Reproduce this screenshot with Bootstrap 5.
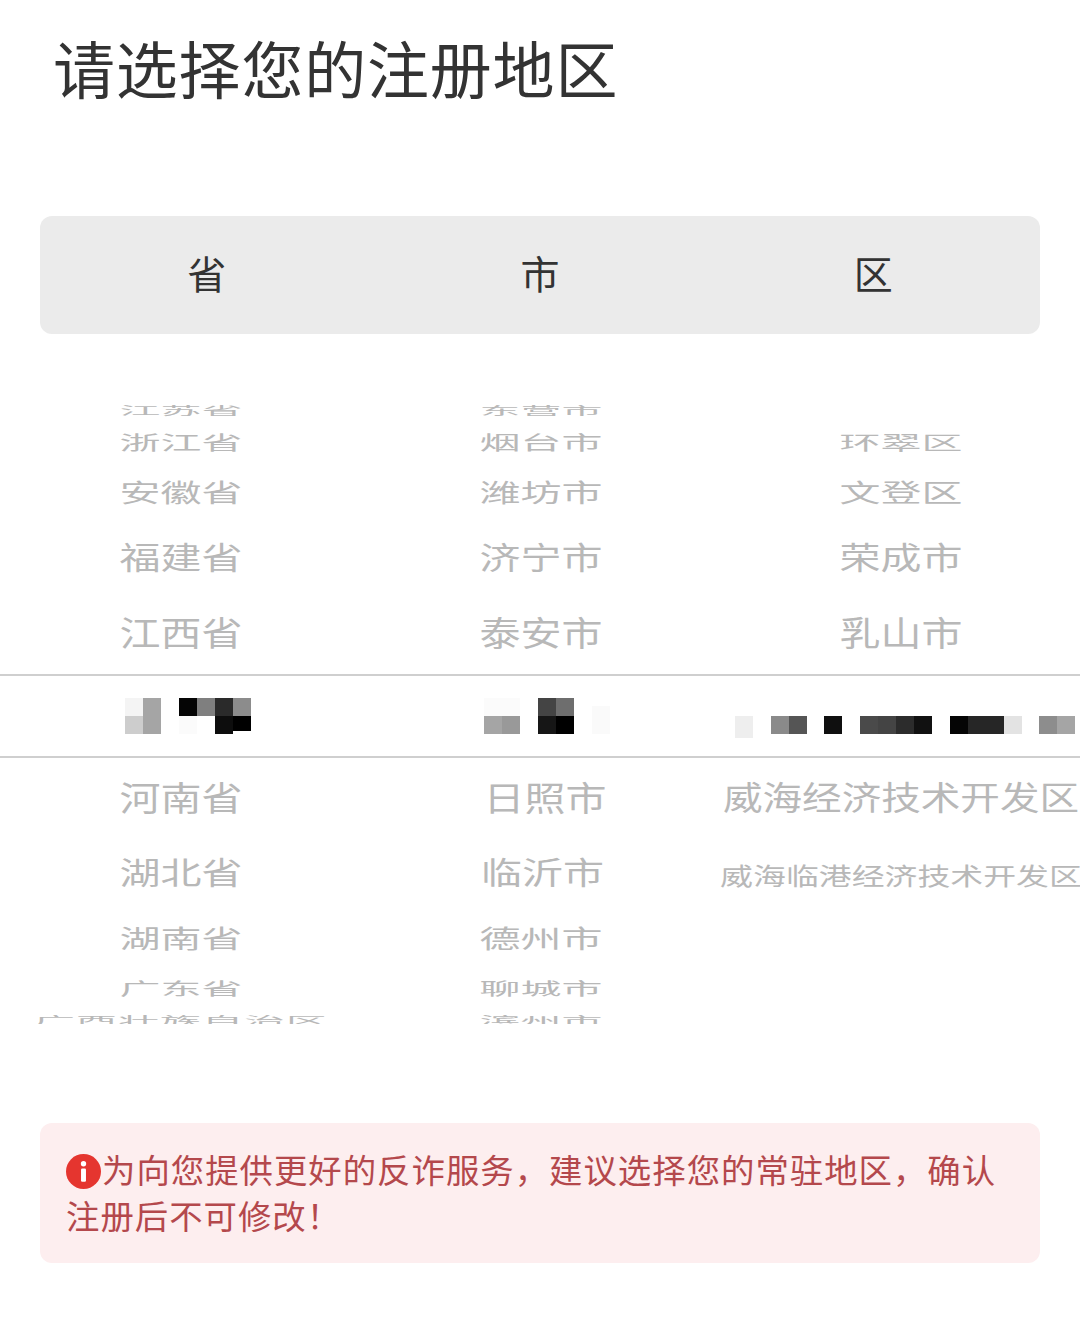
<!DOCTYPE html>
<html lang="zh-CN">
<head>
<meta charset="utf-8">
<title>请选择您的注册地区</title>
<link rel="stylesheet" href="https://cdn.jsdelivr.net/npm/bootstrap@5.3.0/dist/css/bootstrap.min.css">
<style>
body{background:#fff;font-family:"Noto Sans CJK SC","Liberation Sans",sans-serif;width:1080px;height:1328px;overflow:hidden}
.page-title{font-size:62px;line-height:70px;font-weight:400;color:#333;letter-spacing:.8px;padding:32px 0 0 53px;margin:0 0 114px}
.tab-bar{margin:0 40px;height:118px;background:#ebebeb;border-radius:12px;font-size:39px;color:#333;padding-bottom:6px}
.wheel{margin-top:71px;height:619px;overflow:hidden;color:#b8b8b8}
.wheel-in{margin-top:-6px}
.wheel-row{font-size:41px;line-height:1}
.wheel-row>div{display:flex;align-items:center;justify-content:center;height:100%;white-space:nowrap;padding-left:2px}
.h24{height:24px}.h26{height:26px}.h38{height:38px}.h62{height:62px}.h68{height:68px}.h83{height:83px}
.h78{height:78px}.h72{height:72px}.h60{height:60px}.h40{height:40px}
.sq25 span{transform:scaleY(.27)}.sq45 span{transform:scaleY(.46)}.sq58 span{transform:scaleY(.6)}
.sq72 span{transform:scaleY(.74)}.sq80 span{transform:scaleY(.82)}.sq40 span{transform:scaleY(.42)}
.wheel-row span{display:inline-block;margin-bottom:2px}
.wide{letter-spacing:1px}
.wheel-row .long1{font-size:39.6px}
.wheel-row .long2{font-size:32.9px;margin-top:8px}
.wheel-row>.nudge{padding-left:10px}
.wheel-row>.nudge2{padding-left:5px}
.picked{height:84px;border-top:2px solid #cfcfcf;border-bottom:2px solid #cfcfcf}
.picked svg{display:block}
.notice{margin:99px 40px 0;height:140px;background:#fdeeef;border:0;border-radius:12px;padding:23px 26px;color:#b4484c;font-size:33.4px;line-height:46px;letter-spacing:1px}
.notice svg{width:35px;height:35px;vertical-align:-6px;margin-right:1px}
</style>
</head>
<body>
<h1 class="page-title">请选择您的注册地区</h1>

<div class="tab-bar row g-0 text-center align-items-center">
  <div class="col-4">省</div>
  <div class="col-4">市</div>
  <div class="col-4">区</div>
</div>

<div class="wheel">
  <div class="wheel-in">
    <div class="wheel-row row g-0 h24 sq25"><div class="col-4"><span>江苏省</span></div><div class="col-4"><span>东营市</span></div><div class="col-4"></div></div>
    <div class="wheel-row row g-0 h38 sq45"><div class="col-4"><span>浙江省</span></div><div class="col-4"><span>烟台市</span></div><div class="col-4"><span>环翠区</span></div></div>
    <div class="wheel-row row g-0 h62 sq58"><div class="col-4"><span>安徽省</span></div><div class="col-4"><span>潍坊市</span></div><div class="col-4"><span>文登区</span></div></div>
    <div class="wheel-row row g-0 h68 sq72"><div class="col-4"><span>福建省</span></div><div class="col-4"><span>济宁市</span></div><div class="col-4"><span>荣成市</span></div></div>
    <div class="wheel-row row g-0 h83 sq80"><div class="col-4"><span>江西省</span></div><div class="col-4"><span>泰安市</span></div><div class="col-4"><span>乳山市</span></div></div>

    <div class="picked">
      <svg width="1080" height="80" viewBox="0 0 1080 80" xmlns="http://www.w3.org/2000/svg" shape-rendering="crispEdges">
        <rect x="125" y="22" width="18" height="18" fill="#f4f4f4"/><rect x="125" y="40" width="18" height="18" fill="#cdcdcd"/>
        <rect x="143" y="22" width="18" height="36" fill="#a5a5a5"/>
        <rect x="179" y="22" width="18" height="18" fill="#050505"/><rect x="179" y="40" width="18" height="18" fill="#fbfbfb"/>
        <rect x="197" y="22" width="18" height="18" fill="#7f7f7f"/>
        <rect x="215" y="22" width="18" height="18" fill="#2a2a2a"/><rect x="215" y="40" width="18" height="18" fill="#0d0d0d"/>
        <rect x="233" y="22" width="18" height="18" fill="#8c8c8c"/><rect x="233" y="40" width="18" height="15" fill="#000"/>
        <rect x="484" y="22" width="36" height="18" fill="#fbfbfb"/><rect x="484" y="40" width="18" height="18" fill="#a5a5a5"/><rect x="502" y="40" width="18" height="18" fill="#999"/>
        <rect x="538" y="22" width="18" height="18" fill="#444"/><rect x="538" y="40" width="18" height="18" fill="#161616"/>
        <rect x="556" y="22" width="18" height="18" fill="#6e6e6e"/><rect x="556" y="40" width="18" height="18" fill="#000"/>
        <rect x="592" y="30" width="18" height="28" fill="#fafafa"/>
        <rect x="735" y="40" width="18" height="22" fill="#eee"/>
        <rect x="771" y="40" width="18" height="18" fill="#8a8a8a"/><rect x="789" y="40" width="18" height="18" fill="#555"/>
        <rect x="824" y="40" width="18" height="18" fill="#0f0f0f"/>
        <rect x="860" y="40" width="18" height="18" fill="#4a4a4a"/><rect x="878" y="40" width="18" height="18" fill="#444"/><rect x="896" y="40" width="18" height="18" fill="#2c2c2c"/><rect x="914" y="40" width="18" height="18" fill="#111"/>
        <rect x="950" y="40" width="18" height="18" fill="#050505"/><rect x="968" y="40" width="36" height="18" fill="#262626"/><rect x="1004" y="40" width="18" height="18" fill="#e3e3e3"/>
        <rect x="1039" y="40" width="18" height="18" fill="#8d8d8d"/><rect x="1057" y="40" width="18" height="18" fill="#a5a5a5"/>
      </svg>
    </div>

    <div class="wheel-row row g-0 h78 sq80"><div class="col-4"><span>河南省</span></div><div class="col-4 nudge"><span>日照市</span></div><div class="col-4"><span class="long1">威海经济技术开发区</span></div></div>
    <div class="wheel-row row g-0 h72 sq72"><div class="col-4"><span>湖北省</span></div><div class="col-4 nudge2"><span>临沂市</span></div><div class="col-4"><span class="long2">威海临港经济技术开发区</span></div></div>
    <div class="wheel-row row g-0 h60 sq58"><div class="col-4"><span>湖南省</span></div><div class="col-4"><span>德州市</span></div><div class="col-4"></div></div>
    <div class="wheel-row row g-0 h40 sq40"><div class="col-4"><span>广东省</span></div><div class="col-4"><span>聊城市</span></div><div class="col-4"></div></div>
    <div class="wheel-row row g-0 h26 sq25"><div class="col-4"><span class="wide">广西壮族自治区</span></div><div class="col-4"><span>滨州市</span></div><div class="col-4"></div></div>
  </div>
</div>

<div class="notice alert mb-0" role="alert"><svg viewBox="0 0 34 34" xmlns="http://www.w3.org/2000/svg"><circle cx="17" cy="17" r="17" fill="#e5352f"/><rect x="14.6" y="14" width="4.8" height="13" rx="1.2" fill="#fff"/><circle cx="17" cy="9.5" r="2.6" fill="#fff"/></svg>为向您提供更好的反诈服务，建议选择您的常驻地区，确认注册后不可修改！</div>
<script src="https://cdn.jsdelivr.net/npm/bootstrap@5.3.0/dist/js/bootstrap.bundle.min.js"></script>
</body>
</html>
